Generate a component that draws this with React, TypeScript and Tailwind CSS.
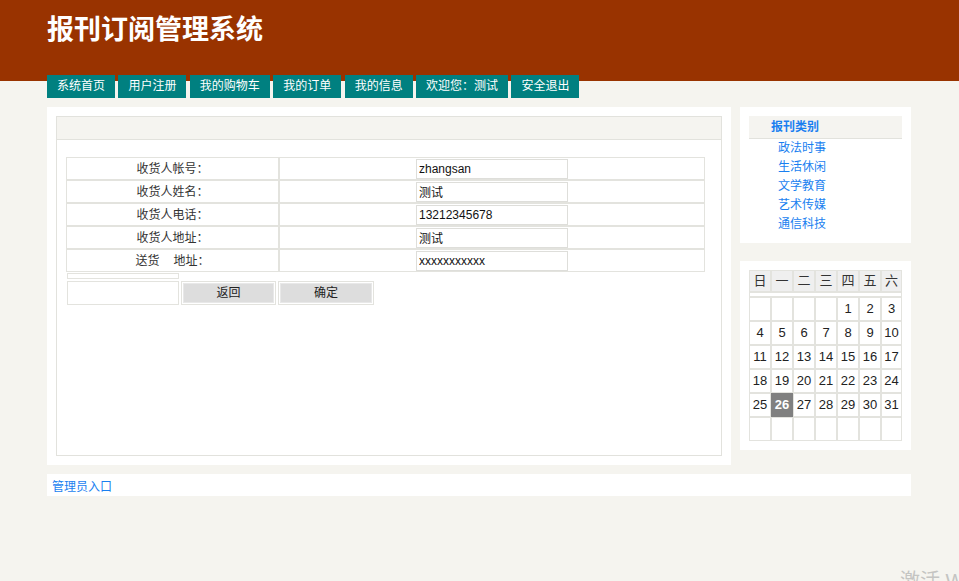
import React from "react";

const NAV = ["系统首页", "用户注册", "我的购物车", "我的订单", "我的信息", "欢迎您：测试", "安全退出"];

const FIELDS: { label: React.ReactNode; value: string }[] = [
  { label: "收货人帐号：", value: "zhangsan" },
  { label: "收货人姓名：", value: "测试" },
  { label: "收货人电话：", value: "13212345678" },
  { label: "收货人地址：", value: "测试" },
  {
    label: (
      <>
        送货<span className="inline-block w-[14px]" />地址：
      </>
    ),
    value: "xxxxxxxxxxx",
  },
];

const CATEGORIES = ["政法时事", "生活休闲", "文学教育", "艺术传媒", "通信科技"];

const WEEK = ["日", "一", "二", "三", "四", "五", "六"];

// month starts on Thursday, 31 days, 6 rows
const DAYS: (number | null)[] = [
  ...Array(4).fill(null),
  ...Array.from({ length: 31 }, (_, i) => i + 1),
  ...Array(7).fill(null),
];

export default function App() {
  return (
    <div className="min-h-screen bg-[#f5f4ef] text-[12px] text-[#333] font-['Liberation_Sans','Noto_Sans_CJK_SC',sans-serif] relative overflow-hidden">
      {/* Header */}
      <div className="h-[75px] bg-[#993300]">
        <div className="w-[864px] ml-[47px] pt-[15px]">
          <h1 className="text-[27px] leading-[30px] font-bold text-white">报刊订阅管理系统</h1>
        </div>
      </div>

      {/* Nav */}
      <div className="bg-[linear-gradient(#993300_6px,transparent_6px)]">
        <div className="w-[864px] ml-[47px] flex gap-[3.4px]">
          {NAV.map((n) => (
            <a
              key={n}
              className="h-[23px] leading-[23px] px-[10px] bg-[#008080] text-white cursor-pointer"
            >
              {n}
            </a>
          ))}
        </div>
      </div>

      {/* Main */}
      <div className="w-[864px] ml-[47px] mt-[9px] flex gap-[9px] items-start">
        <div className="w-[684px] h-[358px] bg-white p-[9px]">
          <div className="h-[340px] border border-[#e2e2dd]">
            <div className="h-[23px] bg-[#f5f4f0] border-b border-[#e2e2dd]" />
            <div className="pl-[9px] pt-[17px]">
              <table className="w-[639px] border-separate border-spacing-0">
                <tbody>
                  {FIELDS.map((f, i) => (
                    <tr key={i}>
                      <td className="w-[213px] h-[23px] p-0 border border-[#e3e3de] text-center">{f.label}</td>
                      <td className="h-[23px] p-0 border border-[#e3e3de] text-center">
                        <input
                          readOnly
                          value={f.value}
                          className="w-[152px] h-[20px] border border-[#dededa] px-[2px] text-[12px] text-[#111] outline-none align-middle"
                        />
                      </td>
                    </tr>
                  ))}
                </tbody>
              </table>

              <div className="flex flex-col gap-[2px] pl-[1px] mt-[1px]">
                <div className="w-[112px] h-[6px] border border-[#e3e3de]" />
                <div className="flex gap-[2px]">
                  <div className="w-[112px] h-[24px] border border-[#e3e3de]" />
                  <div className="w-[95px] h-[24px] border border-[#e3e3de] p-[1px]">
                    <button className="w-full h-full bg-[#dddddd] border border-[#e8e8e8] text-[12px] text-[#222]">返回</button>
                  </div>
                  <div className="w-[96px] h-[24px] border border-[#e3e3de] p-[1px]">
                    <button className="w-full h-full bg-[#dddddd] border border-[#e8e8e8] text-[12px] text-[#222]">确定</button>
                  </div>
                </div>
              </div>
            </div>
          </div>
        </div>

        {/* Sidebar */}
        <div className="w-[171px] flex flex-col gap-[18px]">
          <div className="bg-white p-[9px]">
            <div className="h-[23px] leading-[22px] bg-[#f5f4f0] border-b border-[#e2e2dd] pl-[22px] font-bold text-[#1a7ff0]">
              报刊类别
            </div>
            <ul className="pl-[29px]">
              {CATEGORIES.map((c) => (
                <li key={c} className="leading-[19px] text-[#1a7ff0]">
                  <a className="cursor-pointer">{c}</a>
                </li>
              ))}
            </ul>
          </div>

          <div className="bg-white p-[9px]">
            <div className="grid grid-cols-[22px_22px_22px_22px_22px_22px_21px]">
              {WEEK.map((w) => (
                <div key={w} className="h-[22px] leading-[20px] text-center bg-[#efefef] border border-[#e3e3de] text-[13px]">
                  {w}
                </div>
              ))}
            </div>
            <div className="h-[5px] border border-[#e3e3de]" />
            <div className="grid grid-cols-[22px_22px_22px_22px_22px_22px_21px]">
              {DAYS.map((d, i) => (
                <div
                  key={i}
                  className={`h-[24px] leading-[22px] text-center border text-[13px] ${
                    d === 26
                      ? "bg-[#808080] border-[#808080] text-white font-bold"
                      : "border-[#e3e3de] text-[#222]"
                  }`}
                >
                  {d ?? ""}
                </div>
              ))}
            </div>
          </div>
        </div>
      </div>

      {/* Footer */}
      <div className="w-[864px] ml-[47px] mt-[9px] h-[22px] leading-[26px] bg-white pl-[5px]">
        <a className="text-[#1a7ff0] cursor-pointer">管理员入口</a>
      </div>

      <div className="absolute left-[900px] top-[566px] text-[20px] text-[#c4c4c2] whitespace-nowrap">激活 Windows</div>
    </div>
  );
}
